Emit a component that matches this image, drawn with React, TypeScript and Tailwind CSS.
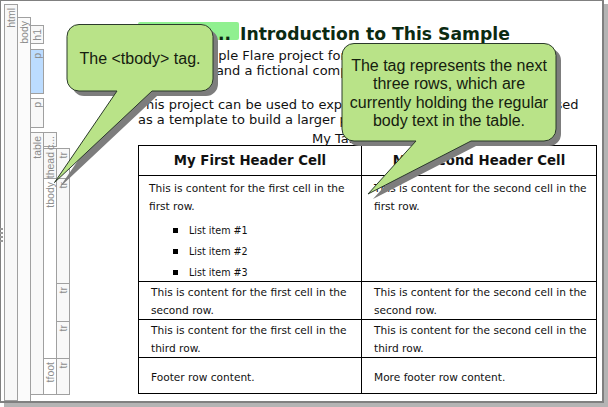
import type { ReactNode } from 'react';

function Bar({ label, className, bg = 'bg-[#f8f8f8]' }: { label?: string; className: string; bg?: string }) {
    return (
        <div className={`flex flex-col items-center border border-[#a0a0a0] pt-[3px] ${bg} ${className}`}>
            {label && (
                <span className="rotate-180 text-[10.5px] leading-none text-[#8c8c8c] [font-family:'Liberation_Sans',sans-serif] [writing-mode:vertical-rl]">
                    {label}
                </span>
            )}
        </div>
    );
}

function Cell({ children, className = '' }: { children: ReactNode; className?: string }) {
    return <td className={`border border-black align-top ${className}`}>{children}</td>;
}

function Callout({ d, children }: { d: string; children: ReactNode }) {
    return (
        <>
            <svg className="absolute top-0 left-0" width="608" height="407">
                <path d={d} fill="#7d7d7d" transform="translate(5 5)" />
                <path d={d} fill="#b9e388" stroke="#2b3a2b" strokeWidth="1" />
            </svg>
            {children}
        </>
    );
}

const callout1 = 'M79 24.5H201a12 12 0 0 1 12 12V79a12 12 0 0 1-12 12H152L54.5 182.5L117 91H79a12 12 0 0 1-12-12V36.5a12 12 0 0 1 12-12Z';
const callout2 = 'M354 43.5H544a12 12 0 0 1 12 12V129a12 12 0 0 1-12 12H471L368 194L416 141H354a12 12 0 0 1-12-12V55.5a12 12 0 0 1 12-12Z';

const rowText = 'text-[10.6px] leading-[18px] text-[#111]';

export default function App() {
    return (
        <div className="relative h-[407px] w-[608px] overflow-hidden bg-white [font-family:'DejaVu_Sans',sans-serif]">
            <div className="flex h-[403px] w-[604px] border-t border-r-2 border-b-2 border-l border-[#808080] bg-white shadow-[4px_4px_0_#b4b4b4]">
                {/* Structure bars */}
                <div className="flex w-[68px] shrink-0 pl-[3px]">
                    <Bar label="html" className="mt-[3px] h-[397px] w-[14px] shrink-0" />
                    <Bar label="body" className="-ml-px mt-[16px] h-[384px] w-[14px] shrink-0 border-b-0" bg="bg-[#fbfbfb]" />
                    <div className="-ml-px flex w-[14px] shrink-0 flex-col">
                        <Bar label="h1" className="mt-[24px] h-[19px]" />
                        <Bar label="p" className="mt-[5px] h-[45px]" bg="bg-[#bcdcff]" />
                        <Bar label="p" className="mt-[4px] h-[30px]" />
                        <Bar label="table" className="mt-[4px] h-[263px]" />
                    </div>
                    <div className="-ml-px flex w-[14px] shrink-0 flex-col">
                        <Bar label="c..." className="mt-[131px] h-[15px]" />
                        <Bar label="thead" className="mt-px h-[31px]" />
                        <Bar label="tbody" className="-mt-px h-[181px]" bg="bg-white" />
                        <Bar label="tfoot" className="-mt-px h-[37px]" bg="bg-white" />
                    </div>
                    <div className="-ml-px flex w-[14px] shrink-0 flex-col">
                        <Bar label="tr" className="mt-[147px] h-[31px]" />
                        <Bar label="tr" className="-mt-px h-[106px]" />
                        <Bar label="tr" className="-mt-px h-[39px]" />
                        <Bar label="tr" className="-mt-px h-[38px]" />
                        <Bar label="tr" className="-mt-px h-[37px]" />
                    </div>
                </div>

                {/* Document content */}
                <div className="flex min-w-0 flex-1 flex-col pt-[21px] pl-[69px] text-[#111]">
                    <div className="flex h-[18px] items-start whitespace-nowrap text-[17.2px] leading-[18px] font-bold text-[#0b2a12]">
                        <span className="h-[18px] w-[101px] rounded-[2px] bg-[#90f090] pt-[3px] pr-[8px] text-right">Flare...</span>
                        <span className="mt-[3px] ml-[1px]">Introduction to This Sample</span>
                    </div>
                    <p className="mt-[8px] w-[460px] text-[13px] leading-[15px]">
                        This is a simple Flare project for a company
                        <br />
                        about Flare and a fictional company.
                    </p>
                    <p className="mt-[19px] whitespace-nowrap text-[13px] leading-[15px]">
                        This project can be used to explore Flare features, or it can be used
                        <br />
                        as a template to build a larger project.
                    </p>

                    <table className="w-[458px] table-fixed border-collapse">
                        <colgroup>
                            <col className="w-[223px]" />
                            <col className="w-[235px]" />
                        </colgroup>
                        <caption className="h-[18px] pt-[5px] text-center text-[13px] leading-[14px]">My Table Caption</caption>
                        <thead>
                            <tr className="h-[30px]">
                                <th className="border border-black text-center text-[13.3px] font-bold">My First Header Cell</th>
                                <th className="border border-black text-center text-[13.3px] font-bold">My Second Header Cell</th>
                            </tr>
                        </thead>
                        <tbody className={rowText}>
                            <tr className="h-[106px]">
                                <Cell className="pt-[3px] pl-[10px]">
                                    <p>This is content for the first cell in the first row.</p>
                                    <ul className="mt-[5px] -mb-[2px] ml-[24px] list-none text-[9.6px] leading-[21px]">
                                        {['List item #1', 'List item #2', 'List item #3'].map((item) => (
                                            <li key={item} className="flex items-center gap-[11px]">
                                                <span className="h-[5px] w-[5px] bg-black" />
                                                {item}
                                            </li>
                                        ))}
                                    </ul>
                                </Cell>
                                <Cell className="pt-[3px] pl-[12px]">This is content for the second cell in the first row.</Cell>
                            </tr>
                            <tr className="h-[38px]">
                                <Cell className="pt-px pl-[12px]">This is content for the first cell in the second row.</Cell>
                                <Cell className="pt-px pl-[12px]">This is content for the second cell in the second row.</Cell>
                            </tr>
                            <tr className="h-[38px]">
                                <Cell className="pt-px pl-[12px]">This is content for the first cell in the third row.</Cell>
                                <Cell className="pt-px pl-[12px]">This is content for the second cell in the third row.</Cell>
                            </tr>
                        </tbody>
                        <tfoot className={rowText}>
                            <tr className="h-[36px]">
                                <Cell className="pt-[10px] pl-[12px]">Footer row content.</Cell>
                                <Cell className="pt-[10px] pl-[12px]">More footer row content.</Cell>
                            </tr>
                        </tfoot>
                    </table>
                </div>
            </div>

            {/* Splitter grip */}
            <div className="absolute top-[228px] left-0 flex flex-col gap-[2px]">
                <span className="h-[2px] w-[3px] bg-[#999]" />
                <span className="h-[2px] w-[3px] bg-[#999]" />
                <span className="h-[2px] w-[3px] bg-[#999]" />
                <span className="h-[2px] w-[3px] bg-[#999]" />
            </div>

            <Callout d={callout1}>
                <div className="absolute top-[49px] left-[67px] w-[146px] text-center text-[16px] leading-[20px] text-[#15200f] [font-family:'Liberation_Sans',sans-serif]">
                    The &lt;tbody&gt; tag.
                </div>
            </Callout>
            <Callout d={callout2}>
                <div className="absolute top-[57px] left-[342px] w-[214px] text-center text-[16px] leading-[18.3px] text-[#15200f] [font-family:'Liberation_Sans',sans-serif]">
                    The tag represents the next
                    <br />
                    three rows, which are
                    <br />
                    currently holding the regular
                    <br />
                    body text in the table.
                </div>
            </Callout>
        </div>
    );
}
